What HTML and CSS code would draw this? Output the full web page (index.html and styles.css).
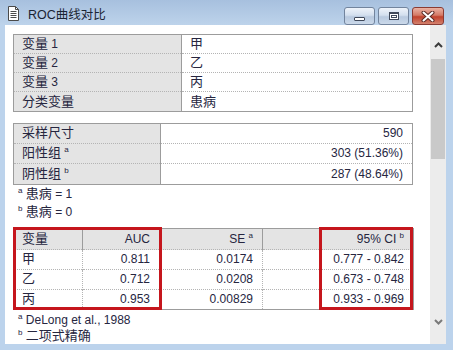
FILE: index.html
```html
<!DOCTYPE html>
<html lang="zh-CN">
<head>
<meta charset="utf-8">
<title>ROC曲线对比</title>
<link rel="stylesheet" href="styles.css">
</head>
<body>
<div class="window">
  <div class="titlebar">
    <svg class="doc-icon" viewBox="0 0 11 15" width="11" height="15">
      <path d="M0.5 0.5 H7.5 L10.5 3.5 V14.5 H0.5 Z" fill="#fff" stroke="#4a4a4a"/>
      <path d="M7.5 0.5 V3.5 H10.5" fill="none" stroke="#4a4a4a"/>
      <path d="M2.5 5.5 H8.5 M2.5 7.5 H8.5 M2.5 9.5 H8.5 M2.5 11.5 H8.5" stroke="#4a4a4a"/>
    </svg>
    <span class="title">ROC曲线对比</span>
    <div class="controls">
      <div class="ctl"><span class="g-min"></span></div>
      <div class="ctl"><span class="g-max"></span></div>
      <div class="ctl close">
        <svg viewBox="0 0 14 11" width="14" height="11">
          <path d="M2.5 1.5 L11.5 9.5 M11.5 1.5 L2.5 9.5" stroke="#5b2b26" stroke-width="4" stroke-linecap="round"/>
          <path d="M2.5 1.5 L11.5 9.5 M11.5 1.5 L2.5 9.5" stroke="#fff" stroke-width="2" stroke-linecap="round"/>
        </svg>
      </div>
    </div>
  </div>
  <div class="frame">
    <div class="client">
      <div class="content">
        <table class="grid t1">
          <tr><th><span class="zh">变量</span> 1</th><td><span class="zh">甲</span></td></tr>
          <tr><th><span class="zh">变量</span> 2</th><td><span class="zh">乙</span></td></tr>
          <tr><th><span class="zh">变量</span> 3</th><td><span class="zh">丙</span></td></tr>
          <tr><th><span class="zh">分类变量</span></th><td><span class="zh">患病</span></td></tr>
        </table>

        <table class="grid t2">
          <tr><th><span class="zh">采样尺寸</span></th><td class="num">590</td></tr>
          <tr><th><span class="zh">阳性组</span> <sup>a</sup></th><td class="num">303 (51.36%)</td></tr>
          <tr><th><span class="zh">阴性组</span> <sup>b</sup></th><td class="num">287 (48.64%)</td></tr>
        </table>
        <div class="notes">
          <div><sup>a</sup> <span class="zh">患病</span> = 1</div>
          <div><sup>b</sup> <span class="zh">患病</span> = 0</div>
        </div>

        <div class="t3-wrap">
          <table class="grid t3">
            <thead>
              <tr><th class="c1"><span class="zh">变量</span></th><th class="c2 num">AUC</th><th class="c3 num">SE <sup>a</sup></th><th class="c4"></th><th class="c5 num">95% CI <sup>b</sup></th></tr>
            </thead>
            <tbody>
              <tr><td><span class="zh">甲</span></td><td class="num">0.811</td><td class="num">0.0174</td><td></td><td class="num">0.777 - 0.842</td></tr>
              <tr><td><span class="zh">乙</span></td><td class="num">0.712</td><td class="num">0.0208</td><td></td><td class="num">0.673 - 0.748</td></tr>
              <tr><td><span class="zh">丙</span></td><td class="num">0.953</td><td class="num">0.00829</td><td></td><td class="num">0.933 - 0.969</td></tr>
            </tbody>
          </table>
          <div class="hl hl-a"></div>
          <div class="hl hl-b"></div>
        </div>
        <div class="notes tight">
          <div><sup>a</sup> DeLong et al., 1988</div>
          <div><sup>b</sup> <span class="zh">二项式精确</span></div>
        </div>
      </div>
      <div class="scrollbar">
        <div class="sb-up"><svg viewBox="0 0 9 6" width="9" height="6"><path d="M1 5 L4.5 1.5 L8 5" fill="none" stroke="#3c3c3c" stroke-width="2"/></svg></div>
        <div class="sb-thumb"></div>
        <div class="sb-track"></div>
        <div class="sb-down"><svg viewBox="0 0 9 6" width="9" height="6"><path d="M1 1 L4.5 4.5 L8 1" fill="none" stroke="#7a7a7a" stroke-width="2"/></svg></div>
      </div>
    </div>
  </div>
</div>
</body>
</html>
```

FILE: styles.css
```css
* { box-sizing: border-box; }
html, body { margin: 0; padding: 0; }
body {
  width: 453px;
  height: 350px;
  overflow: hidden;
  font-family: "Liberation Sans", "Noto Sans CJK SC", sans-serif;
  font-size: 12px;
  color: #26263f;
}
.zh { font-size: 13px; line-height: 1; }
.window {
  width: 453px;
  height: 350px;
  display: flex;
  flex-direction: column;
  background: #bcd3ec;
}
.titlebar {
  height: 28px;
  display: flex;
  align-items: center;
  padding-left: 8px;
  background: linear-gradient(#a7c0de, #bdd3eb);
}
.doc-icon { margin-right: 9px; margin-top: 1px; }
.title {
  flex: 1;
  font-size: 12.5px;
  color: #1b2433;
  margin-top: 1px;
}
.controls {
  display: flex;
  gap: 3px;
  align-self: flex-start;
  margin-top: 7px;
  margin-right: 9px;
}
.ctl {
  width: 31px;
  height: 18px;
  border: 1px solid #72849d;
  border-radius: 3px;
  background: linear-gradient(#eef3fa, #d3dfee 45%, #b8c9df 55%, #cbd9ea);
  display: flex;
  align-items: center;
  justify-content: center;
}
.ctl.close {
  width: 32px;
  border-color: #8a3b33;
  background: linear-gradient(#eab2a4, #d47a66 45%, #c1412c 55%, #d3826e);
}
.g-min {
  width: 11px;
  height: 4px;
  margin-top: 5px;
  background: #fff;
  border: 1px solid #40495a;
  border-radius: 1px;
}
.g-max {
  width: 10px;
  height: 8px;
  background: #fff;
  border: 1px solid #40495a;
  border-top-width: 2px;
  position: relative;
}
.g-max::after {
  content: "";
  position: absolute;
  left: 1px; top: 1px; right: 1px; bottom: 1px;
  border: 1px solid #40495a;
}
.frame {
  flex: 1;
  display: flex;
  padding: 0 7px 7px 5px;
}
.client {
  flex: 1;
  display: flex;
  background: #fff;
}
.content {
  flex: 1;
  padding: 9px 0 0 8px;
}

/* tables */
.grid {
  border-collapse: collapse;
  width: 400px;
  table-layout: fixed;
  border: 1px solid #9c9c9c;
}
.grid th, .grid td {
  padding: 0 8px;
  font-weight: normal;
  text-align: left;
  white-space: nowrap;
  border-top: 1px dotted #b4b4b4;
  border-left: 1px solid #9c9c9c;
}
.grid th { background: #e4e4e4; }
.grid .num { text-align: right; padding-right: 9px; }
sup { font-size: 8px; vertical-align: 5px; line-height: 0; }

.t1 th, .t1 td { height: 19px; line-height: 18px; }
.t1 tr:last-child th, .t1 tr:last-child td { height: 20px; }
.t1 th { width: 168px; }

.t2 { margin-top: 11px; }
.t2 th, .t2 td { height: 20px; line-height: 19px; }
.t2 tr:last-child th, .t2 tr:last-child td { height: 21px; }
.t2 th { width: 147px; }

.notes {
  padding-left: 5px;
  line-height: 18px;
}
.notes.tight { line-height: 16px; padding-top: 2px; }

.t3-wrap { position: relative; margin-top: 7px; width: 400px; }
.t3 thead th { background: #e4e4e4; height: 21px; line-height: 20px; border-left-style: solid; }
.t3 tbody td { height: 20px; line-height: 19px; border-left: 1px dotted #b4b4b4; }
.t3 tbody td:first-child { border-left: none; }
.t3 .c1 { width: 69px; }
.t3 .c2 { width: 77px; }
.t3 .c3 { width: 103px; }
.t3 .c4 { width: 59px; }
.t3 .c5 { width: 92px; }

.hl {
  position: absolute;
  top: -1px;
  height: 83px;
  border: 3px solid #c5161d;
}
.hl-a { left: 0; width: 149px; }
.hl-b { left: 306px; width: 94px; }

/* scrollbar */
.scrollbar {
  width: 16px;
  margin-left: 17px;
  display: flex;
  flex-direction: column;
  background: #ececec;
}
.sb-up {
  height: 34px;
  display: flex;
  align-items: center;
  justify-content: center;
  padding-top: 5px;
}
.sb-thumb {
  height: 100px;
  margin: 0 1px;
  background: #c9c9c9;
}
.sb-track { flex: 1; }
.sb-down {
  height: 44px;
  display: flex;
  align-items: center;
  justify-content: center;
}
```
